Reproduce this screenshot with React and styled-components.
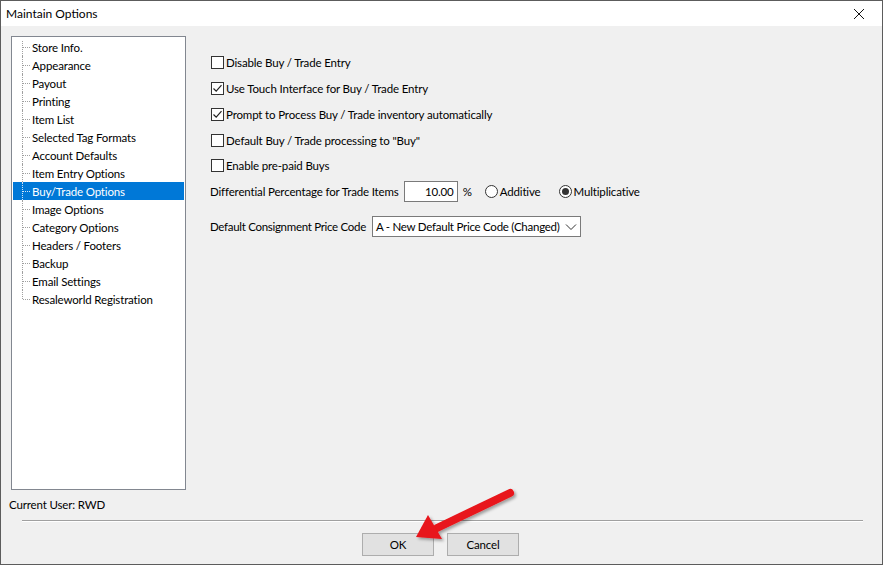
import React from "react";
import styled, { createGlobalStyle } from "styled-components";

const Global = createGlobalStyle`
  html, body {
    margin: 0;
    padding: 0;
    background: #f0f0f0;
  }
  body {
    font-family: Lato, "Liberation Sans", sans-serif;
    font-size: 11.5px;
    letter-spacing: -0.15px;
    color: #000;
  }
`;

const Window = styled.div`
  position: relative;
  width: 883px;
  height: 565px;
  box-sizing: border-box;
  border: 1px solid #5c5c5c;
  background: #f0f0f0;
  display: flex;
  flex-direction: column;
  overflow: hidden;
`;

const TitleBar = styled.div`
  height: 25px;
  background: #fff;
  display: flex;
  align-items: center;
  justify-content: space-between;
  padding-left: 5px;
  flex-shrink: 0;
`;

const Title = styled.span`
  font-size: 12px;
  letter-spacing: 0;
`;

const CloseBox = styled.div`
  width: 46px;
  height: 25px;
  display: flex;
  align-items: center;
  justify-content: center;
`;

const Body = styled.div`
  flex: 1;
  display: flex;
  flex-direction: column;
`;

const Main = styled.div`
  display: flex;
  padding: 10px 0 0 10px;
`;

const LeftCol = styled.div`
  display: flex;
  flex-direction: column;
`;

const TreePanel = styled.div`
  width: 175px;
  height: 454px;
  box-sizing: border-box;
  border: 1px solid #828790;
  background: #fff;
  padding: 1px 1px;
`;

const TreeRow = styled.div`
  height: 18px;
  display: flex;
  align-items: center;
  background: ${(p) => (p.$selected ? "#0078d7" : "transparent")};
  color: ${(p) => (p.$selected ? "#fff" : "#000")};
`;

const Guide = styled.div`
  position: relative;
  width: 18px;
  height: 18px;
  margin-left: 9px;
  flex-shrink: 0;

  &::before {
    content: "";
    position: absolute;
    left: 0;
    top: ${(p) => (p.$first ? "3px" : "0")};
    height: ${(p) => (p.$last ? "9px" : p.$first ? "15px" : "18px")};
    border-left: 1px dotted ${(p) => (p.$selected ? "#cfe4f7" : "#a0a0a0")};
  }
  &::after {
    content: "";
    position: absolute;
    left: 1px;
    top: 9px;
    width: 7px;
    border-top: 1px dotted ${(p) => (p.$selected ? "#cfe4f7" : "#a0a0a0")};
  }
`;

const TreeLabel = styled.span`
  margin-left: -8px;
  white-space: nowrap;
`;

const CurrentUser = styled.div`
  margin: 8px 0 0 -2px;
  height: 14px;
  line-height: 14px;
`;

const Options = styled.div`
  display: flex;
  flex-direction: column;
  padding: 14px 0 0 24px;
`;

const CheckRow = styled.label`
  height: 25.75px;
  display: flex;
  align-items: center;
  gap: 2px;
  white-space: nowrap;
`;

const Box = styled.span`
  width: 13px;
  height: 13px;
  box-sizing: border-box;
  border: 1px solid #333;
  background: #fff;
  display: inline-flex;
  align-items: center;
  justify-content: center;
  margin-left: 1px;
`;

const FieldRow = styled.div`
  display: flex;
  align-items: center;
  white-space: nowrap;
  height: ${(p) => p.$h}px;
  margin-top: ${(p) => p.$mt || 0}px;
`;

const FieldLabel = styled.span`
  letter-spacing: ${(p) => (p.$tight ? "-0.3px" : "inherit")};
`;

const NumberBox = styled.div`
  width: 54px;
  height: 21px;
  box-sizing: border-box;
  border: 1px solid #7a7a7a;
  background: #fff;
  margin-left: 5px;
  display: flex;
  align-items: center;
  justify-content: flex-end;
  padding-right: 3px;
`;

const Percent = styled.span`
  margin-left: 5px;
`;

const Radio = styled.span`
  width: 13px;
  height: 13px;
  box-sizing: border-box;
  border: 1px solid #333;
  border-radius: 50%;
  background: #fff;
  display: inline-flex;
  align-items: center;
  justify-content: center;
  margin-left: ${(p) => p.$ml}px;
  margin-right: 2px;

  &::after {
    content: "";
    display: ${(p) => (p.$on ? "block" : "none")};
    width: 7px;
    height: 7px;
    border-radius: 50%;
    background: #333;
  }
`;

const Select = styled.div`
  width: 209px;
  height: 21px;
  box-sizing: border-box;
  border: 1px solid #7a7a7a;
  background: #fff;
  margin-left: 6px;
  display: flex;
  align-items: center;
  justify-content: space-between;
  padding: 0 3px 0 3px;
  letter-spacing: -0.25px;
`;

const Footer = styled.div`
  margin-top: auto;
  display: flex;
  flex-direction: column;
  align-items: center;
`;

const Separator = styled.div`
  width: 841px;
  margin-left: 2px;
  border-top: 1px solid #a0a0a0;
  border-bottom: 1px solid #fff;
`;

const Buttons = styled.div`
  display: flex;
  gap: 13px;
  padding: 11px 0 8px 0;
  margin-left: -2px;
`;

const Button = styled.div`
  width: 72px;
  height: 23px;
  box-sizing: border-box;
  border: 1px solid #adadad;
  background: #e1e1e1;
  display: flex;
  align-items: center;
  justify-content: center;
`;

const Pointer = styled.svg`
  position: absolute;
  left: 400px;
  top: 480px;
  pointer-events: none;
`;

const pages = [
  "Store Info.",
  "Appearance",
  "Payout",
  "Printing",
  "Item List",
  "Selected Tag Formats",
  "Account Defaults",
  "Item Entry Options",
  "Buy/Trade Options",
  "Image Options",
  "Category Options",
  "Headers / Footers",
  "Backup",
  "Email Settings",
  "Resaleworld Registration",
];

const checks = [
  { label: "Disable Buy / Trade Entry", on: false },
  { label: "Use Touch Interface for Buy / Trade Entry", on: true },
  { label: "Prompt to Process Buy / Trade inventory automatically", on: true },
  { label: 'Default Buy / Trade processing to "Buy"', on: false },
  { label: "Enable pre-paid Buys", on: false },
];

const Tick = () => (
  <svg width="11" height="11" viewBox="0 0 11 11">
    <path d="M1.5 5.5 L4.2 8.2 L9.5 2.2" fill="none" stroke="#222" strokeWidth="1.2" />
  </svg>
);

const App = () => {
  const selected = "Buy/Trade Options";
  return (
    <>
      <Global />
      <Window>
        <TitleBar>
          <Title>Maintain Options</Title>
          <CloseBox>
            <svg width="12" height="12" viewBox="0 0 12 12">
              <path d="M1 1 L11 11 M11 1 L1 11" stroke="#111" strokeWidth="1" />
            </svg>
          </CloseBox>
        </TitleBar>
        <Body>
          <Main>
            <LeftCol>
              <TreePanel>
                {pages.map((p, i) => (
                  <TreeRow key={p} $selected={p === selected}>
                    <Guide
                      $first={i === 0}
                      $last={i === pages.length - 1}
                      $selected={p === selected}
                    />
                    <TreeLabel>{p}</TreeLabel>
                  </TreeRow>
                ))}
              </TreePanel>
              <CurrentUser>Current User: RWD</CurrentUser>
            </LeftCol>
            <Options>
              {checks.map((c) => (
                <CheckRow key={c.label}>
                  <Box>{c.on && <Tick />}</Box>
                  <span>{c.label}</span>
                </CheckRow>
              ))}
              <FieldRow $h={22} $mt={2}>
                <FieldLabel>Differential Percentage for Trade Items</FieldLabel>
                <NumberBox>10.00</NumberBox>
                <Percent>%</Percent>
                <Radio $ml={13} />
                <span>Additive</span>
                <Radio $ml={18} $on />
                <span>Multiplicative</span>
              </FieldRow>
              <FieldRow $h={22} $mt={13}>
                <FieldLabel $tight>Default Consignment Price Code</FieldLabel>
                <Select>
                  <span>A - New Default Price Code (Changed)</span>
                  <svg width="12" height="8" viewBox="0 0 12 8">
                    <path d="M1 1.5 L6 6.5 L11 1.5" fill="none" stroke="#333" strokeWidth="1" />
                  </svg>
                </Select>
              </FieldRow>
            </Options>
          </Main>
          <Footer>
            <Separator />
            <Buttons>
              <Button>OK</Button>
              <Button>Cancel</Button>
            </Buttons>
          </Footer>
        </Body>
        <Pointer width="130" height="70" viewBox="0 0 130 70">
          <defs>
            <filter id="drop" x="-20%" y="-20%" width="140%" height="140%">
              <feDropShadow dx="2" dy="2" stdDeviation="1.5" floodColor="#000" floodOpacity="0.35" />
            </filter>
          </defs>
          <g filter="url(#drop)">
            <path
              d="M109 12 L36 47"
              stroke="#e8141a"
              strokeWidth="8"
              strokeLinecap="round"
              fill="none"
            />
            <path d="M15 56 L27 34 L41 58 Z" fill="#e8141a" />
          </g>
        </Pointer>
      </Window>
    </>
  );
};

export default App;
